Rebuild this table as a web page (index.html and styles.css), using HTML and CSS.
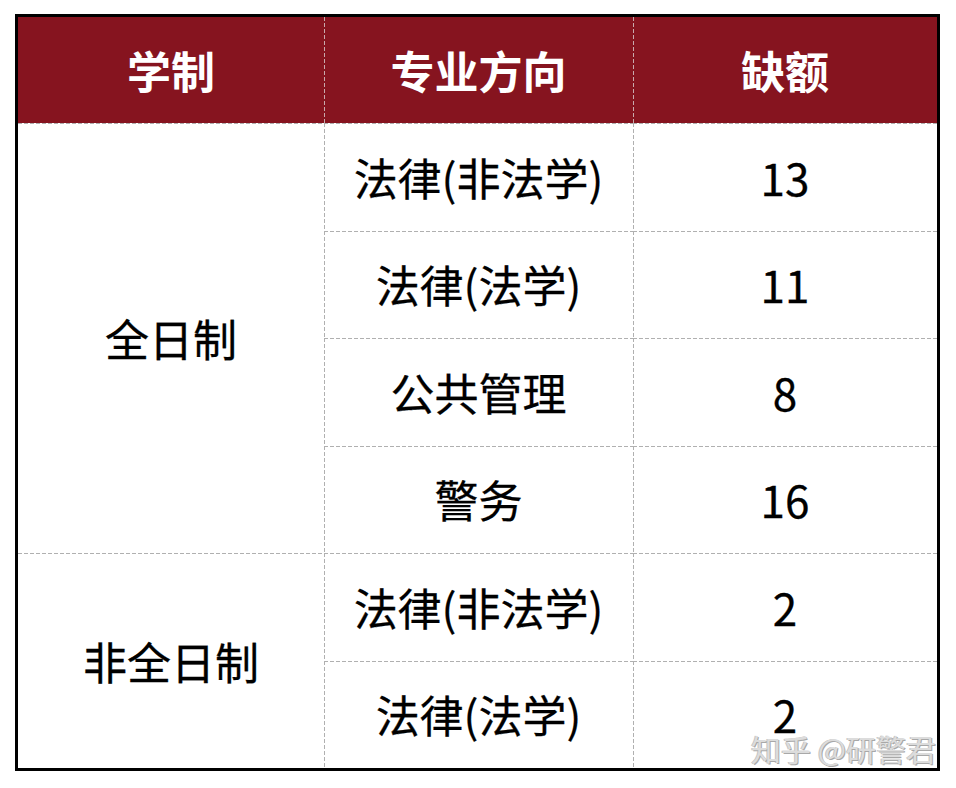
FILE: index.html
```html
<!DOCTYPE html>
<html lang="zh-CN">
<head>
<meta charset="utf-8">
<link rel="stylesheet" href="styles.css">
</head>
<body>
<div class="wrap">
  <div class="table">
    <div class="cell head">学制</div>
    <div class="cell head sep">专业方向</div>
    <div class="cell head sep">缺额</div>

    <div class="cell body span4">全日制</div>
    <div class="cell body sep">法律(非法学)</div>
    <div class="cell body sep">13</div>
    <div class="cell body sep">法律(法学)</div>
    <div class="cell body sep">11</div>
    <div class="cell body sep">公共管理</div>
    <div class="cell body sep">8</div>
    <div class="cell body sep">警务</div>
    <div class="cell body sep">16</div>

    <div class="cell body span2">非全日制</div>
    <div class="cell body sep">法律(非法学)</div>
    <div class="cell body sep">2</div>
    <div class="cell body sep">法律(法学)</div>
    <div class="cell body sep">2</div>
  </div>
  <div class="watermark">知乎 @研警君</div>
</div>
</body>
</html>
```
FILE: styles.css
```css
html, body {
  margin: 0;
  padding: 0;
  background: #ffffff;
}
body {
  font-family: "Noto Sans CJK SC", "Noto Sans", sans-serif;
}
.wrap {
  position: relative;
  width: 956px;
  height: 788px;
  padding: 14px 0 0 15px;
  box-sizing: border-box;
}
.table {
  display: grid;
  grid-template-columns: 306px 309px 304px;
  grid-template-rows: 106px repeat(6, 1fr);
  width: 925px;
  height: 757px;
  box-sizing: border-box;
  border: 3px solid #000;
  background: #fff;
}
.cell {
  display: flex;
  align-items: center;
  justify-content: center;
  font-size: 44px;
  line-height: 1;
  background-repeat: no-repeat;
}
.head {
  background-color: #86141f;
  color: #fff;
  font-weight: 700;
}
.body {
  color: #000;
  -webkit-text-stroke: 0.3px #000;
  background-image: repeating-linear-gradient(to right, #b0b0b0 0 4px, transparent 4px 6px);
  background-size: 100% 1px;
  background-position: 0 0;
}
.head.sep {
  background-image: repeating-linear-gradient(to bottom, #c9a9ac 0 4px, transparent 4px 6px);
  background-size: 1px 100%;
  background-position: 0 0;
}
.body.sep {
  background-image:
    repeating-linear-gradient(to right, #b0b0b0 0 4px, transparent 4px 6px),
    repeating-linear-gradient(to bottom, #b0b0b0 0 4px, transparent 4px 6px);
  background-size: 100% 1px, 1px 100%;
  background-position: 0 0, 0 0;
}
.span4 {
  grid-column: 1;
  grid-row: 2 / span 4;
}
.span2 {
  grid-column: 1;
  grid-row: 6 / span 2;
}
.watermark {
  position: absolute;
  left: 751px;
  top: 733px;
  font-size: 30px;
  line-height: 1;
  color: #dcdcdc;
  text-shadow: 1px 1px 0 #a8a8a8, -1px 0 0 #c4c4c4;
  letter-spacing: 0;
}
```
